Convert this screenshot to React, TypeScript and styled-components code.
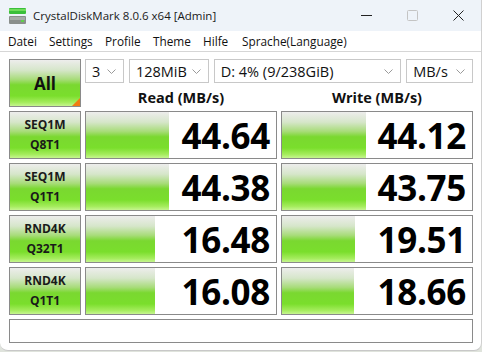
import React from 'react'
import styled, { createGlobalStyle } from 'styled-components'

const GlobalStyle = createGlobalStyle`
    html, body {
        margin:0;
        padding:0;
        background:#dfe3dc;
    }
    body {
        font-family:"Open Sans","Noto Sans",sans-serif;
    }
`

const Window = styled.div`
    width:481px;
    height:350px;
    background:#ffffff;
    border-right:1px solid #d0d0d0;
    border-bottom:1px solid #c8c8c8;
    border-radius:0 0 8px 8px;
    overflow:hidden;
    display:flex;
    flex-direction:column;
`
const TitleBar = styled.div`
    flex-shrink:0;
    height:31px;
    background:#eef3f9;
    display:flex;
    align-items:center;
    padding-left:9px;
    font-size:11.5px;
    color:#1a1a1a;
`
const TitleText = styled.span`
    margin-left:7px;
    flex:1;
`
const Controls = styled.div`
    display:flex;
    height:100%;
`
const ControlButton = styled.div`
    width:46px;
    height:100%;
    display:flex;
    align-items:center;
    justify-content:center;
`
const MenuBar = styled.div`
    flex-shrink:0;
    height:20px;
    display:flex;
    align-items:center;
    padding-left:8px;
    font-size:11.8px;
    color:#111;
    border-bottom:1px solid #d6d6d6;
`
const MenuItem = styled.span<{ $w: number }>`
    width:${p => p.$w}px;
    white-space:nowrap;
`
const Content = styled.div`
    padding:7px 0 0 9px;
    display:grid;
    grid-template-columns:72px 192px 192px;
    grid-template-rows:repeat(5, 48px) 24px;
    column-gap:4px;
    row-gap:4px;
`
const greenGradient = `linear-gradient(to bottom, #ededec 0%, #d6e6ca 22%, #a8dc7a 42%, #7ad830 54%, #7ade2c 78%, #a4ec5c 92%, #c6f590 100%)`

const AllButton = styled.div`
    position:relative;
    box-sizing:border-box;
    border:1px solid #8a8a8a;
    background:${greenGradient};
    display:flex;
    align-items:center;
    justify-content:center;
    font-weight:700;
    font-size:17px;
    color:#111;
    &:after {
        content:"";
        position:absolute;
        right:0;
        bottom:0;
        border-style:solid;
        border-width:0 0 8px 8px;
        border-color:transparent transparent #f07c12 transparent;
    }
`
const TopArea = styled.div`
    grid-column:2 / span 2;
    display:grid;
    grid-template-columns:192px 192px;
    grid-template-rows:24px 1fr;
    column-gap:4px;
`
const SelectRow = styled.div`
    grid-column:1 / span 2;
    display:flex;
    gap:5px;
`
const Select = styled.div<{ $w: number }>`
    box-sizing:border-box;
    width:${p => p.$w}px;
    height:24px;
    border:1px solid #c8c8c8;
    background:#fff;
    display:flex;
    align-items:center;
    justify-content:space-between;
    padding:0 7px 0 6px;
    font-size:14.5px;
    color:#111;
`
const ColumnHeader = styled.div`
    display:flex;
    align-items:flex-end;
    justify-content:center;
    font-weight:700;
    font-size:14.5px;
    color:#111;
    line-height:18px;
`
const TestLabel = styled.div`
    box-sizing:border-box;
    border:1px solid #8a8a8a;
    background:${greenGradient};
    display:flex;
    flex-direction:column;
    align-items:center;
    justify-content:center;
    font-weight:700;
    font-size:12px;
    line-height:20px;
    color:#1a1a1a;
`
const ResultCell = styled.div`
    position:relative;
    box-sizing:border-box;
    border:1px solid #8a8a8a;
    background:#fff;
    display:flex;
    align-items:center;
    justify-content:flex-end;
    padding-right:6px;
    font-weight:700;
    font-size:35px;
    letter-spacing:-0.3px;
    color:#000;
`
const Bar = styled.div`
    position:absolute;
    left:0;
    top:0;
    bottom:0;
    background:${greenGradient};
`
const Value = styled.span`
    position:relative;
`
const StatusBar = styled.div`
    grid-column:1 / span 3;
    box-sizing:border-box;
    border:1px solid #8a8a8a;
    background:#fff;
`

const Chevron = () => (
    <svg width="9" height="5" viewBox="0 0 9 5">
        <path d="M0.5 0.5 L4.5 4.5 L8.5 0.5" fill="none" stroke="#9a9a9a" strokeWidth="1" />
    </svg>
)

const AppIcon = () => (
    <svg width="17" height="16" viewBox="0 0 17 16">
        <rect x="0" y="0" width="17" height="6" rx="1" fill="#3bbf3b" />
        <rect x="0" y="1" width="17" height="2" fill="#6fdc5a" />
        <rect x="0" y="8" width="17" height="8" rx="1" fill="#8a8f8c" />
        <rect x="1" y="9" width="15" height="3" fill="#a6aba8" />
        <rect x="12" y="12" width="3" height="2" fill="#5fd04a" />
    </svg>
)

const rows = [
    { l1: 'SEQ1M', l2: 'Q8T1', read: '44.64', rw: 83, write: '44.12', ww: 84 },
    { l1: 'SEQ1M', l2: 'Q1T1', read: '44.38', rw: 83, write: '43.75', ww: 84 },
    { l1: 'RND4K', l2: 'Q32T1', read: '16.48', rw: 69, write: '19.51', ww: 73 },
    { l1: 'RND4K', l2: 'Q1T1', read: '16.08', rw: 69, write: '18.66', ww: 72 },
]

const menus: [string, number][] = [
    ['Datei', 41], ['Settings', 56], ['Profile', 48], ['Theme', 50], ['Hilfe', 39], ['Sprache(Language)', 120],
]

const App = () => {
    return (
        <>
            <GlobalStyle />
            <Window>
                <TitleBar>
                    <AppIcon />
                    <TitleText>CrystalDiskMark 8.0.6 x64 [Admin]</TitleText>
                    <Controls>
                        <ControlButton>
                            <svg width="11" height="11" viewBox="0 0 11 11"><path d="M0 5.5 H11" stroke="#222" strokeWidth="1" /></svg>
                        </ControlButton>
                        <ControlButton>
                            <svg width="11" height="11" viewBox="0 0 11 11"><rect x="0.5" y="0.5" width="10" height="10" rx="1" fill="none" stroke="#c4c4c4" /></svg>
                        </ControlButton>
                        <ControlButton>
                            <svg width="11" height="11" viewBox="0 0 11 11"><path d="M0.5 0.5 L10.5 10.5 M10.5 0.5 L0.5 10.5" stroke="#222" strokeWidth="1" /></svg>
                        </ControlButton>
                    </Controls>
                </TitleBar>
                <MenuBar>
                    {menus.map(([m, w]) => <MenuItem key={m} $w={w}>{m}</MenuItem>)}
                </MenuBar>
                <Content>
                    <AllButton>All</AllButton>
                    <TopArea>
                        <SelectRow>
                            <Select $w={39}>3<Chevron /></Select>
                            <Select $w={80}>128MiB<Chevron /></Select>
                            <Select $w={188}>D: 4% (9/238GiB)<Chevron /></Select>
                            <Select $w={67}>MB/s<Chevron /></Select>
                        </SelectRow>
                        <ColumnHeader>Read (MB/s)</ColumnHeader>
                        <ColumnHeader>Write (MB/s)</ColumnHeader>
                    </TopArea>
                    {rows.map((r, i) => (
                        <React.Fragment key={i}>
                            <TestLabel><span>{r.l1}</span><span>{r.l2}</span></TestLabel>
                            <ResultCell>
                                <Bar style={{ width: r.rw }} />
                                <Value>{r.read}</Value>
                            </ResultCell>
                            <ResultCell>
                                <Bar style={{ width: r.ww }} />
                                <Value>{r.write}</Value>
                            </ResultCell>
                        </React.Fragment>
                    ))}
                    <StatusBar />
                </Content>
            </Window>
        </>
    )
}

export default App
